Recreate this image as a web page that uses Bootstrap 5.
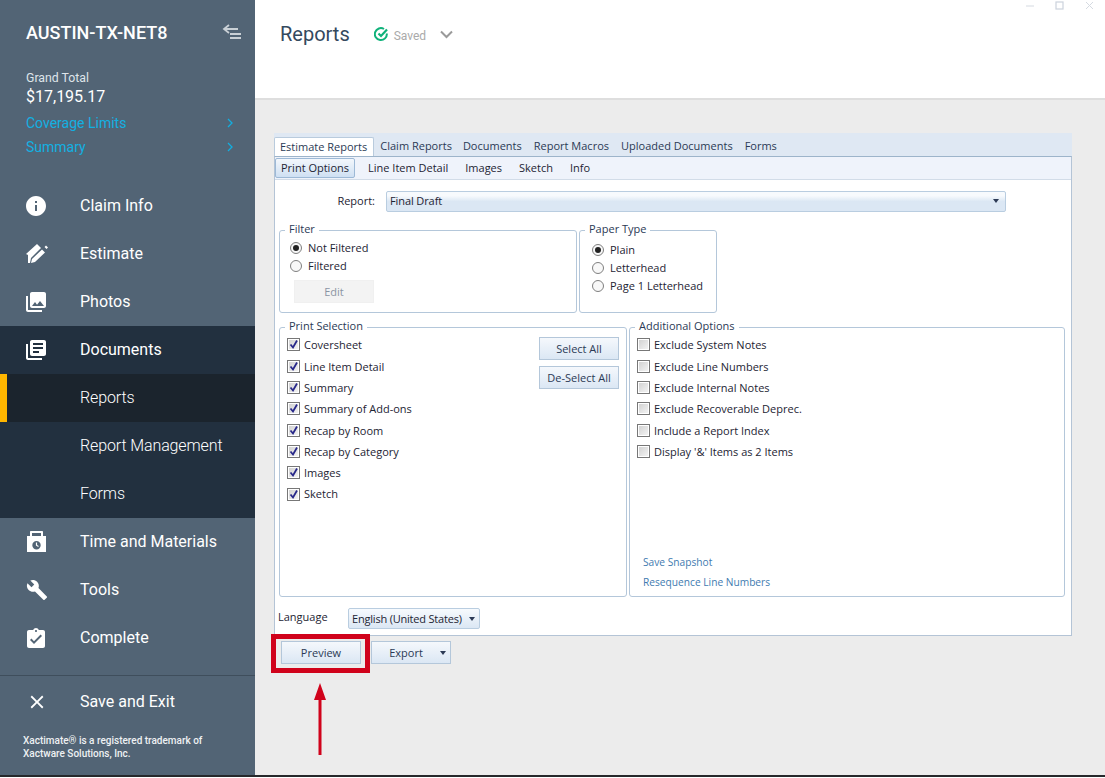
<!DOCTYPE html>
<html lang="en">
<head>
<meta charset="utf-8">
<title>Reports</title>
<link href="https://cdn.jsdelivr.net/npm/bootstrap@5.3.0/dist/css/bootstrap.min.css" rel="stylesheet">
<style>
html,body{height:100%;overflow:hidden;background:#fff}
.shell{height:777px;border-bottom:2px solid #26282b}
.side{width:255px;background:#526475;color:#fff;font-family:Roboto,sans-serif;flex:none}
.side-title{font-size:18px;font-weight:500;line-height:22px;padding:22px 14px 0 26px}
.side-title svg{margin-top:-3px}
.side-total{padding:26px 22px 0 26px}
.total-label{font-size:12.3px;line-height:16px;color:#dfe5ea}
.total-value{font-size:16px;line-height:22px}
.side-link{font-size:14px;line-height:24px;color:#12b0e2}
.total-value+.side-link{margin-top:3px}
.chev{width:6px;height:10px}
.menu-row{height:48px;font-size:16px;color:#fff;padding-left:26px}
.menu-row svg{width:22px;height:22px;margin-right:32px;flex:none}
.menu-sub{padding-left:80px;letter-spacing:-.12px}
.menu-dark{background:#22303f}
.menu-cur{background:#1b242d;box-shadow:inset 7px 0 0 #ffb600}
.side-nav{margin-top:23px}
.side-foot{border-top:1px solid #3f4e5c;margin-top:13px;padding-top:2px}
.foot-note{font-size:10px;font-weight:500;line-height:13px;padding:8px 0 0 23px;color:#eef1f3}
.work{background:#ececec;font-family:"Open Sans",sans-serif;font-size:11px;color:#1d2433;min-width:0}
.top{height:100px;background:#fff;border-bottom:2px solid #dedede;padding:21px 0 0 25px;position:relative}
.top-title{font-family:Roboto,sans-serif;font-size:20px;line-height:26px;color:#34495e;margin-right:24px}
.saved{font-family:Roboto,sans-serif;font-size:12px;color:#aaa;margin-left:5px;margin-right:14px;padding-top:6px;line-height:18px}
.ic-check{margin-top:6px}
.ic-drop{margin-top:9px}
.win{position:absolute;top:0;right:0;gap:20px;padding:1px 10px 0 0}
.win svg{width:10px;height:10px}
.panel{margin:33px 0 0 19px;width:798px;background:#dfe8f3}
.tabs{height:23px;padding:4px 0 0 0}
.tab-item{padding:0 6px;line-height:17px;height:19px;color:#2b3a55;white-space:nowrap}
.tab-on{background:#fff;border:1px solid #b9cbdd;border-bottom:0;padding:0 6px 0 5px;line-height:17px;height:19px;border-radius:2px 2px 0 0}
.tab-tight{padding-right:5px}
.body-box{background:#fff;border:1px solid #b4c4d6;border-top:1px solid #9db4ca;height:480px}
.subtabs{height:23px;background:#eff3fb;border-bottom:1px solid #d2dce8;padding:1px 0 0 0}
.sub-item{padding:0 7px;line-height:20px;height:20px;margin-right:3px;color:#1d2433}
.sub-on{background:linear-gradient(#f3f7fc,#cfe0f3);border:1px solid #9db9d6;border-radius:2px;padding:0 5px;margin-right:6px;height:20px;line-height:18px}
.rep-row{height:21px;margin-top:11px;padding-right:65px}
.rep-label{width:100px;text-align:right;margin-right:11px;line-height:20px}
.rep-select{flex:1;height:21px;border:1px solid #b9cde0;border-radius:2px;background:linear-gradient(#f7fafd 0,#f7fafd 20%,#dbe7f4 50%,#dbe7f4 100%);padding:0 6px 1px 3px;line-height:18px;letter-spacing:-.1px}
.caret-d{width:0;height:0;border-left:3.5px solid transparent;border-right:3.5px solid transparent;border-top:4px solid #2c3a55;display:inline-block;flex:none}
.grp{border:1px solid #b4c7da;border-radius:3px;margin:0;padding:0;min-width:0;position:relative}
.grp>legend{float:none;width:auto;font-size:11px;line-height:14px;margin:-9px 0 0 5px;padding:0 4px;color:#2b3a55;background:#fff;display:block;position:absolute;top:0;left:0}
.opts-one{padding:0 0 0 4px;gap:2px;margin-top:18px}
.g-filter{width:298px;height:83px;padding:8px 0 0 10px}
.g-paper{width:138px;height:83px;padding:10px 0 0 12px}
.radio-row{height:18px;line-height:18px}
.rad{width:12px;height:12px;border:1px solid #7f7f7f;border-radius:50%;background:#f8f8f8;margin-right:6px;flex:none;display:inline-flex;align-items:center;justify-content:center}
.rad-on::after{content:"";width:6px;height:6px;border-radius:50%;background:#222}
.btn-dis{width:80px;height:23px;margin:5px 0 0 4px;background:#f3f3f3;border:1px solid #f0f0f0;color:#8b95a3;text-align:center;line-height:21px}
.opts-two{padding:0 0 0 4px;gap:2px;margin-top:14px}
.g-print{width:348px;height:270px;padding:6.350px 0 0 7px}
.g-add{width:436px;height:270px;padding:6.350px 0 0 7px}
.chk-row{height:21.3px;line-height:21.3px;white-space:nowrap}
.chk{width:13px;height:13px;border:1px solid #777;box-shadow:inset 0 0 0 1px #fff;background:linear-gradient(135deg,#cfcfcf,#f6f6f6);margin-right:4px;flex:none;display:inline-flex;align-items:center;justify-content:center}
.chk svg{width:11px;height:11px}
.xbtn{background:linear-gradient(#f5f8fc,#dbe7f4);border:1px solid #b4c7da;color:#2b3a55;text-align:center;width:80px;height:23px;line-height:21px;font-size:11px;padding:0;border-radius:0}
.sel-btns{position:absolute;top:9px;right:7px;gap:6px}
.links{position:absolute;left:13px;bottom:4px;color:#3f7bb0;font-size:10.2px;line-height:20px}
.lang-row{margin:11px 0 0 3px;height:21px}
.lang-label{width:70px;line-height:18px;padding-bottom:3px}
.lang-select{width:132px;height:21px;border:1px solid #b9cde0;border-radius:2px;background:linear-gradient(#f7fafd,#dbe7f4);padding:0 4px 0 3px;line-height:19px;white-space:nowrap;letter-spacing:-.2px}
.actions{margin-left:26px;padding-top:5px;gap:10px}
.pv-btn{position:relative}
.pv-btn::after{content:"";position:absolute;top:-8px;bottom:-10px;left:-11px;right:-10px;border:5px solid #d0021b;pointer-events:none}
.arrow-red{display:block;margin:19px 0 0 59px;width:12px;height:72px}
.exp{padding:0 4px 0 0}
.exp span:first-child{flex:1}
</style>
</head>
<body>
<div class="shell d-flex overflow-hidden">
 <aside class="side d-flex flex-column">
  <div class="side-title d-flex justify-content-between align-items-center">
   <span>AUSTIN-TX-NET8</span>
   <svg width="19" height="16" viewBox="0 0 19 16" fill="none" stroke="#c9d0d6" stroke-width="2"><path d="M7 1 2 5l5 4" stroke-width="1.8"/><path d="M2 5h14M8 10h11M8 14h11"/></svg>
  </div>
  <div class="side-total">
   <div class="total-label">Grand Total</div>
   <div class="total-value">$17,195.17</div>
   <div class="side-link d-flex justify-content-between align-items-center">Coverage Limits<svg class="chev" viewBox="0 0 6 10" fill="none" stroke="#12aee0" stroke-width="1.3"><path d="m1 1 4 4-4 4"/></svg></div>
   <div class="side-link d-flex justify-content-between align-items-center">Summary<svg class="chev" viewBox="0 0 6 10" fill="none" stroke="#12aee0" stroke-width="1.3"><path d="m1 1 4 4-4 4"/></svg></div>
  </div>
  <nav class="side-nav">
   <div class="menu-row d-flex align-items-center"><svg viewBox="2 1 22 22" fill="#fff"><path d="M12 2C6.480 2 2 6.480 2 12s4.480 10 10 10 10-4.480 10-10S17.520 2 12 2zm1 15h-2v-6h2v6zm0-8h-2V7h2v2z"/></svg>Claim Info</div>
   <div class="menu-row d-flex align-items-center"><svg viewBox="0 0 22 22" fill="#fff"><path d="M0 11 11 1l4 4L5 15l-1 5H2v-8zM16 6.500l3 3L9 19l-4 1 1-4zM18.500 4l1.500-1.500L22 4.500 20.500 6z"/></svg>Estimate</div>
   <div class="menu-row d-flex align-items-center"><svg viewBox="2 1 22 22" fill="#fff"><path d="M22 16V4c0-1.100-.9-2-2-2H8c-1.100 0-2 .9-2 2v12c0 1.100.9 2 2 2h12c1.100 0 2-.9 2-2zm-11-4l2.030 2.710L16 11l4 5H8l3-4zM2 6v14c0 1.100.9 2 2 2h14v-2H4V6H2z"/></svg>Photos</div>
   <div class="menu-row menu-dark d-flex align-items-center"><svg viewBox="2 1 22 22" fill="#fff"><path d="M4 6H2v14c0 1.100.9 2 2 2h14v-2H4V6zm16-4H8c-1.100 0-2 .9-2 2v12c0 1.100.9 2 2 2h12c1.100 0 2-.9 2-2V4c0-1.100-.9-2-2-2zm-1 9H9V9h10v2zm-4 4H9v-2h6v2zm4-8H9V5h10v2z"/></svg>Documents</div>
   <div class="menu-row menu-sub menu-cur d-flex align-items-center fw-light">Reports</div>
   <div class="menu-row menu-sub menu-dark d-flex align-items-center fw-light">Report Management</div>
   <div class="menu-row menu-sub menu-dark d-flex align-items-center fw-light">Forms</div>
   <div class="menu-row d-flex align-items-center"><svg viewBox="0 0 22 22" fill="#fff"><path fill-rule="evenodd" d="M1 5h3V1c0-.6.4-1 1-1h11c.6 0 1 .4 1 1v4h3v16H1zM6 2v3h9V2zm4.500 8a4.200 4.200 0 1 0 0 8.400 4.200 4.200 0 0 0 0-8.400zm-.6 1.500h1.200v2.500l1.700 1-.6 1-2.300-1.400z"/></svg>Time and Materials</div>
   <div class="menu-row d-flex align-items-center"><svg viewBox="0 0 24 24" fill="#fff"><path d="M22.700 19l-9.100-9.100c.9-2.300.4-5-1.500-6.900-2-2-5-2.400-7.400-1.300L9 6 6 9 1.600 4.700C.4 7.100.9 10.100 2.900 12.100c1.900 1.900 4.600 2.400 6.900 1.500l9.100 9.100c.4.400 1 .4 1.400 0l2.300-2.300c.5-.4.5-1.100.1-1.400z"/></svg>Tools</div>
   <div class="menu-row d-flex align-items-center"><svg viewBox="2 0 22 22" fill="#fff"><path d="M19 3h-4.180C14.400 1.840 13.300 1 12 1c-1.300 0-2.400.84-2.820 2H5c-1.100 0-2 .9-2 2v14c0 1.100.9 2 2 2h14c1.100 0 2-.9 2-2V5c0-1.100-.9-2-2-2zm-7 0c.55 0 1 .45 1 1s-.45 1-1 1-1-.45-1-1 .45-1 1-1zm-2 14l-4-4 1.410-1.410L10 14.170l6.590-6.590L18 9l-8 8z"/></svg>Complete</div>
  </nav>
  <div class="side-foot">
   <div class="menu-row d-flex align-items-center"><svg viewBox="0 0 24 24" fill="#fff"><path d="M19 6.410 17.590 5 12 10.590 6.410 5 5 6.410 10.590 12 5 17.590 6.410 19 12 13.410 17.590 19 19 17.590 13.410 12z"/></svg>Save and Exit</div>
   <div class="foot-note">Xactimate® is a registered trademark of<br>Xactware Solutions, Inc.</div>
  </div>
 </aside>
 <main class="work flex-grow-1">
  <header class="top d-flex align-items-start">
   <span class="top-title">Reports</span>
   <svg class="ic-check" width="15" height="15" viewBox="0 0 15 15" fill="none"><path d="M12.800 6.500A6 6 0 1 1 10 2" stroke="#0fb27a" stroke-width="2"/><path d="m4.500 6.500 2.500 2.500 6-6.500" stroke="#0fb27a" stroke-width="2.200"/></svg>
   <span class="saved">Saved</span>
   <svg class="ic-drop" width="13" height="9" viewBox="0 0 13 9" fill="none" stroke="#9a9a9a" stroke-width="2"><path d="m1 1.500 5.500 5.500L12 1.500"/></svg>
   <div class="win d-flex">
    <svg viewBox="0 0 10 10" stroke="#d5dae1" fill="none"><path d="M1 5h8"/></svg>
    <svg viewBox="0 0 10 10" stroke="#ccd3dd" fill="none" stroke-width="1.200"><rect x="1" y="1" width="7" height="7"/></svg>
    <svg viewBox="0 0 10 10" stroke="#d5dae1" fill="none"><path d="m1 1 7 7M8 1 1 8"/></svg>
   </div>
  </header>
  <section class="panel">
   <div class="tabs d-flex">
    <span class="tab-item tab-on">Estimate Reports</span><span class="tab-item tab-tight">Claim Reports</span><span class="tab-item">Documents</span><span class="tab-item">Report Macros</span><span class="tab-item">Uploaded Documents</span><span class="tab-item">Forms</span>
   </div>
   <div class="body-box">
    <div class="subtabs d-flex">
     <span class="sub-on">Print Options</span><span class="sub-item">Line Item Detail</span><span class="sub-item">Images</span><span class="sub-item">Sketch</span><span class="sub-item">Info</span>
    </div>
    <div class="rep-row d-flex">
     <span class="rep-label">Report:</span>
     <div class="rep-select d-flex justify-content-between align-items-center"><span>Final Draft</span><i class="caret-d"></i></div>
    </div>
    <div class="opts-one d-flex">
     <fieldset class="grp g-filter"><legend>Filter</legend>
      <div class="radio-row d-flex align-items-center"><i class="rad rad-on"></i>Not Filtered</div>
      <div class="radio-row d-flex align-items-center"><i class="rad"></i>Filtered</div>
      <div class="btn-dis">Edit</div>
     </fieldset>
     <fieldset class="grp g-paper"><legend>Paper Type</legend>
      <div class="radio-row d-flex align-items-center"><i class="rad rad-on"></i>Plain</div>
      <div class="radio-row d-flex align-items-center"><i class="rad"></i>Letterhead</div>
      <div class="radio-row d-flex align-items-center"><i class="rad"></i>Page 1 Letterhead</div>
     </fieldset>
    </div>
    <div class="opts-two d-flex">
     <fieldset class="grp g-print"><legend>Print Selection</legend>
      <div class="chk-row d-flex align-items-center"><i class="chk"><svg viewBox="0 0 11 11" fill="none" stroke="#28288a" stroke-width="1.800"><path d="m2.500 5.500 2.500 3L9 1.500"/></svg></i>Coversheet</div>
      <div class="chk-row d-flex align-items-center"><i class="chk"><svg viewBox="0 0 11 11" fill="none" stroke="#28288a" stroke-width="1.800"><path d="m2.500 5.500 2.500 3L9 1.500"/></svg></i>Line Item Detail</div>
      <div class="chk-row d-flex align-items-center"><i class="chk"><svg viewBox="0 0 11 11" fill="none" stroke="#28288a" stroke-width="1.800"><path d="m2.500 5.500 2.500 3L9 1.500"/></svg></i>Summary</div>
      <div class="chk-row d-flex align-items-center"><i class="chk"><svg viewBox="0 0 11 11" fill="none" stroke="#28288a" stroke-width="1.800"><path d="m2.500 5.500 2.500 3L9 1.500"/></svg></i>Summary of Add-ons</div>
      <div class="chk-row d-flex align-items-center"><i class="chk"><svg viewBox="0 0 11 11" fill="none" stroke="#28288a" stroke-width="1.800"><path d="m2.500 5.500 2.500 3L9 1.500"/></svg></i>Recap by Room</div>
      <div class="chk-row d-flex align-items-center"><i class="chk"><svg viewBox="0 0 11 11" fill="none" stroke="#28288a" stroke-width="1.800"><path d="m2.500 5.500 2.500 3L9 1.500"/></svg></i>Recap by Category</div>
      <div class="chk-row d-flex align-items-center"><i class="chk"><svg viewBox="0 0 11 11" fill="none" stroke="#28288a" stroke-width="1.800"><path d="m2.500 5.500 2.500 3L9 1.500"/></svg></i>Images</div>
      <div class="chk-row d-flex align-items-center"><i class="chk"><svg viewBox="0 0 11 11" fill="none" stroke="#28288a" stroke-width="1.800"><path d="m2.500 5.500 2.500 3L9 1.500"/></svg></i>Sketch</div>
      <div class="sel-btns d-flex flex-column"><button type="button" class="btn xbtn">Select All</button><button type="button" class="btn xbtn">De-Select All</button></div>
     </fieldset>
     <fieldset class="grp g-add"><legend>Additional Options</legend>
      <div class="chk-row d-flex align-items-center"><i class="chk"></i>Exclude System Notes</div>
      <div class="chk-row d-flex align-items-center"><i class="chk"></i>Exclude Line Numbers</div>
      <div class="chk-row d-flex align-items-center"><i class="chk"></i>Exclude Internal Notes</div>
      <div class="chk-row d-flex align-items-center"><i class="chk"></i>Exclude Recoverable Deprec.</div>
      <div class="chk-row d-flex align-items-center"><i class="chk"></i>Include a Report Index</div>
      <div class="chk-row d-flex align-items-center"><i class="chk"></i>Display '&amp;' Items as 2 Items</div>
      <div class="links"><div>Save Snapshot</div><div>Resequence Line Numbers</div></div>
     </fieldset>
    </div>
    <div class="lang-row d-flex align-items-center">
     <span class="lang-label">Language</span>
     <div class="lang-select d-flex justify-content-between align-items-center"><span>English (United States)</span><i class="caret-d"></i></div>
    </div>
   </div>
  </section>
  <div class="actions d-flex">
   <button type="button" class="btn xbtn pv-btn">Preview</button>
   <button type="button" class="btn xbtn exp d-flex align-items-center"><span>Export</span><i class="caret-d"></i></button>
  </div>
  <svg class="arrow-red" viewBox="0 0 12 72" fill="#d0021b"><path d="M6 0 12 17H7.500v55h-3V17H0z"/></svg>
 </main>
</div>
<script src="https://cdn.jsdelivr.net/npm/bootstrap@5.3.0/dist/js/bootstrap.bundle.min.js"></script>
</body>
</html>
